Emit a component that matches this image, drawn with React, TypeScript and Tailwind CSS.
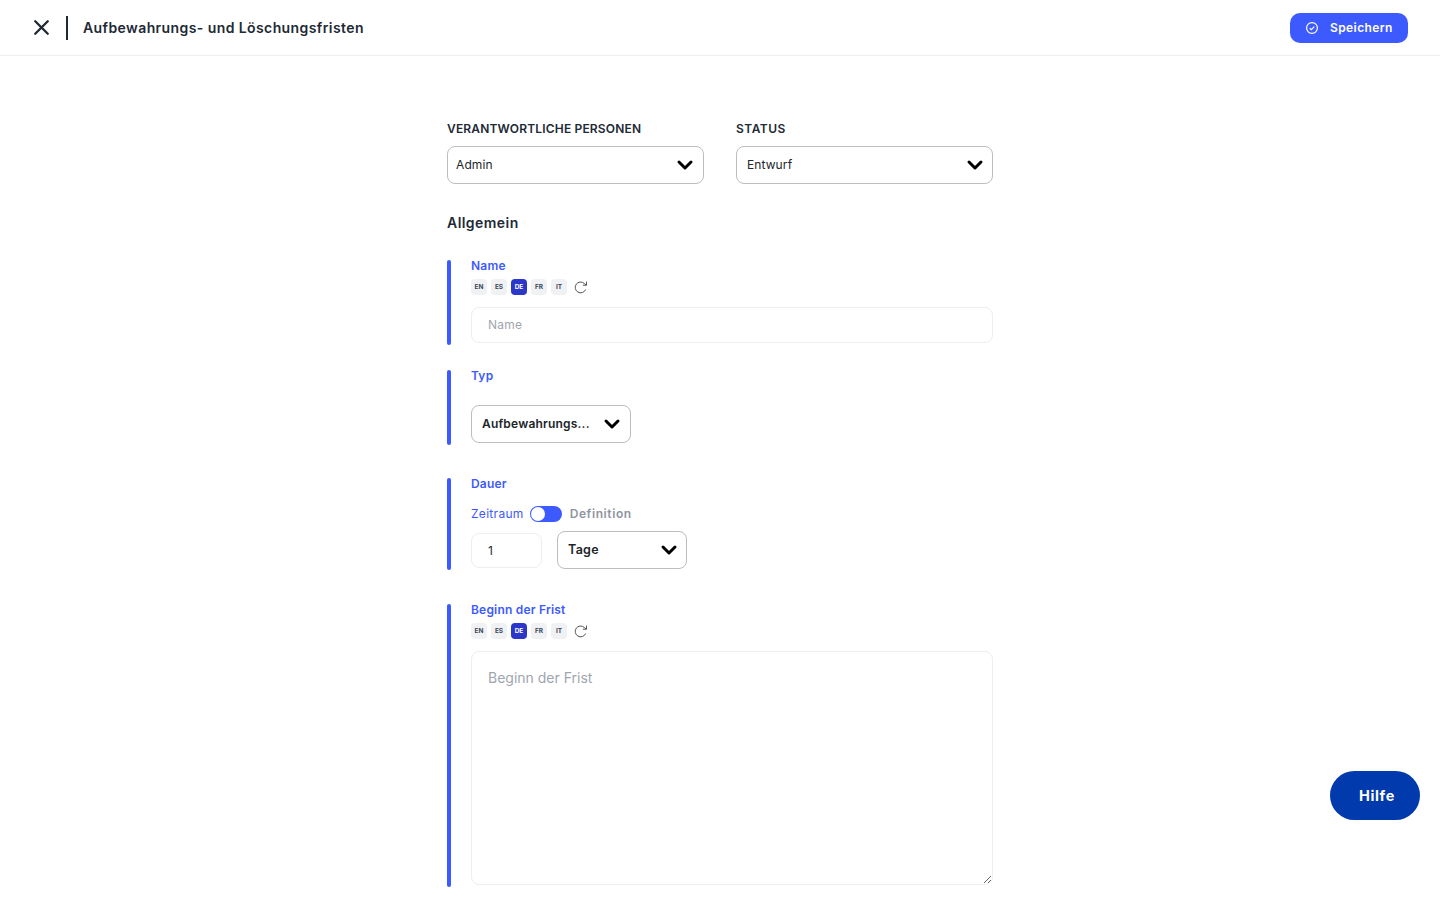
import { useState } from "react";
import { ChevronDown, X } from "lucide-react";

const languages = ["EN", "ES", "DE", "FR", "IT"];

const SelectBox = ({
    value,
    className,
    textClass = "text-xs tracking-[0.1px]",
}: {
    value: string;
    className: string;
    textClass?: string;
}) => {
    return (
        <div
            className={`flex h-[38px] items-center justify-between rounded-lg border border-[#bdbdbd] bg-white text-[#212529] ${className}`}
        >
            <span className={textClass}>{value}</span>
            <ChevronDown size={24} strokeWidth={3} className="text-black" />
        </div>
    );
};

const LanguageChips = () => {
    return (
        <div className="mt-2 flex h-4 items-center gap-1">
            {languages.map((lang) => (
                <span
                    key={lang}
                    className={`flex h-4 w-4 items-center justify-center rounded-[4px] pt-px text-[6.5px] font-bold ${
                        lang === "DE"
                            ? "bg-[#2a37c9] text-white"
                            : "bg-[#f0f1f3] text-[#3b4657]"
                    }`}
                >
                    {lang}
                </span>
            ))}
            <svg
                width="15"
                height="15"
                viewBox="0 0 15 15"
                fill="none"
                stroke="#555555"
                strokeWidth="1"
                className="ml-[2px]"
            >
                <path d="M12.6 9.5A5.4 5.4 0 1 1 11.4 3.6L13.5 5.2" />
                <path d="M13.5 1.6V5.2H9.9" />
            </svg>
        </div>
    );
};

const Field = ({
    label,
    className,
    children,
}: {
    label: string;
    className: string;
    children: React.ReactNode;
}) => {
    return (
        <section className={`flex ${className}`}>
            <div className="w-1 shrink-0 rounded-full bg-[#3d5afe]"></div>
            <div className="ml-5 flex min-w-0 flex-1 flex-col">
                <label className="h-[11px] text-xs leading-[11px] font-semibold tracking-[0.2px] text-[#3d5afe]">
                    {label}
                </label>
                {children}
            </div>
        </section>
    );
};

export default function App() {
    const [name, setName] = useState("");
    const [start, setStart] = useState("");

    return (
        <div className="relative h-screen overflow-hidden bg-white font-['Inter',sans-serif]">
            <header className="flex h-[56px] items-center justify-between border-b border-[#eeeeee] pl-[29px] pr-8">
                <div className="flex items-center">
                    <X size={25} strokeWidth={2.25} className="text-[#212935]" />
                    <div className="ml-[12px] h-6 w-0.5 bg-[#212935]"></div>
                    <h1 className="ml-[15px] text-sm font-semibold tracking-[0.41px] text-[#212935]">
                        Aufbewahrungs- und Löschungsfristen
                    </h1>
                </div>
                <button className="flex h-[30px] w-[118px] items-center rounded-[10px] bg-[#3d5afe] pl-4 text-xs font-semibold tracking-[0.4px] text-white">
                    <svg width="12" height="12" viewBox="0 0 12 12" fill="none" stroke="currentColor" strokeWidth="1.2">
                        <circle cx="6" cy="6" r="5.4" />
                        <path d="M3.7 6.2 5.3 7.7 8.3 4.6" />
                    </svg>
                    <span className="ml-3">Speichern</span>
                </button>
            </header>

            <main className="mx-auto w-[546px] pt-[66px]">
                <div className="flex gap-8">
                    <div className="w-[257px]">
                        <div className="h-[14px] text-xs leading-[14px] font-semibold tracking-[0.17px] text-[#212935]">
                            VERANTWORTLICHE PERSONEN
                        </div>
                        <SelectBox value="Admin" className="mt-[10px] w-full pl-2 pr-[6px]" />
                    </div>
                    <div className="w-[257px]">
                        <div className="h-[14px] text-xs leading-[14px] font-semibold tracking-[0.5px] text-[#212935]">
                            STATUS
                        </div>
                        <SelectBox value="Entwurf" className="mt-[10px] w-full pl-[10px] pr-[5px]" />
                    </div>
                </div>

                <h2 className="mt-[31px] h-4 text-sm leading-4 font-semibold tracking-[0.45px] text-[#212935]">
                    Allgemein
                </h2>

                <Field label="Name" className="mt-[29px] h-[85px]">
                    <LanguageChips />
                    <input
                        value={name}
                        onChange={(e) => setName(e.target.value)}
                        placeholder="Name"
                        className="mt-3 h-9 w-full rounded-lg border border-[#eeeeee] px-4 pb-0.5 text-xs tracking-[0.2px] outline-none placeholder:text-[#a0a6b0]"
                    />
                </Field>

                <Field label="Typ" className="mt-[25px] h-[75px]">
                    <SelectBox
                        value="Aufbewahrungs..."
                        className="mt-6 w-40 pl-[10px] pr-[6px]"
                        textClass="text-xs font-semibold tracking-[0.2px]"
                    />
                </Field>

                <Field label="Dauer" className="mt-[33px] h-[92px]">
                    <div className="mt-[17px] flex h-4 items-center">
                        <span className="text-xs tracking-[0.3px] text-[#3d5afe]">Zeitraum</span>
                        <div className="ml-[6px] h-4 w-8 rounded-full bg-[#3d5afe] p-px">
                            <div className="h-[14px] w-[14px] rounded-full bg-white"></div>
                        </div>
                        <span className="ml-2 text-xs font-semibold tracking-[0.6px] text-[#8f95a0]">
                            Definition
                        </span>
                    </div>
                    <div className="mt-[9px] flex gap-[15px]">
                        <div className="mt-0.5 flex h-[35px] w-[71px] items-center rounded-lg border border-[#eeeeee] pl-4 text-xs text-[#212935]">
                            1
                        </div>
                        <SelectBox
                            value="Tage"
                            className="w-[130px] pl-[10px] pr-[5px]"
                            textClass="text-[12.5px] font-semibold tracking-[0.3px]"
                        />
                    </div>
                </Field>

                <Field label="Beginn der Frist" className="mt-[34px] h-[283px]">
                    <LanguageChips />
                    <textarea
                        value={start}
                        onChange={(e) => setStart(e.target.value)}
                        placeholder="Beginn der Frist"
                        className="mt-3 h-[234px] w-full rounded-lg border border-[#eeeeee] px-4 py-4 text-sm leading-[20px] outline-none placeholder:text-[#a0a6b0]"
                    ></textarea>
                </Field>
            </main>

            <button className="absolute left-[1330px] top-[771px] h-[49px] w-[90px] rounded-full bg-[#003aad] pl-1 text-[14.5px] font-bold tracking-[0.6px] text-white">
                Hilfe
            </button>
        </div>
    );
}
